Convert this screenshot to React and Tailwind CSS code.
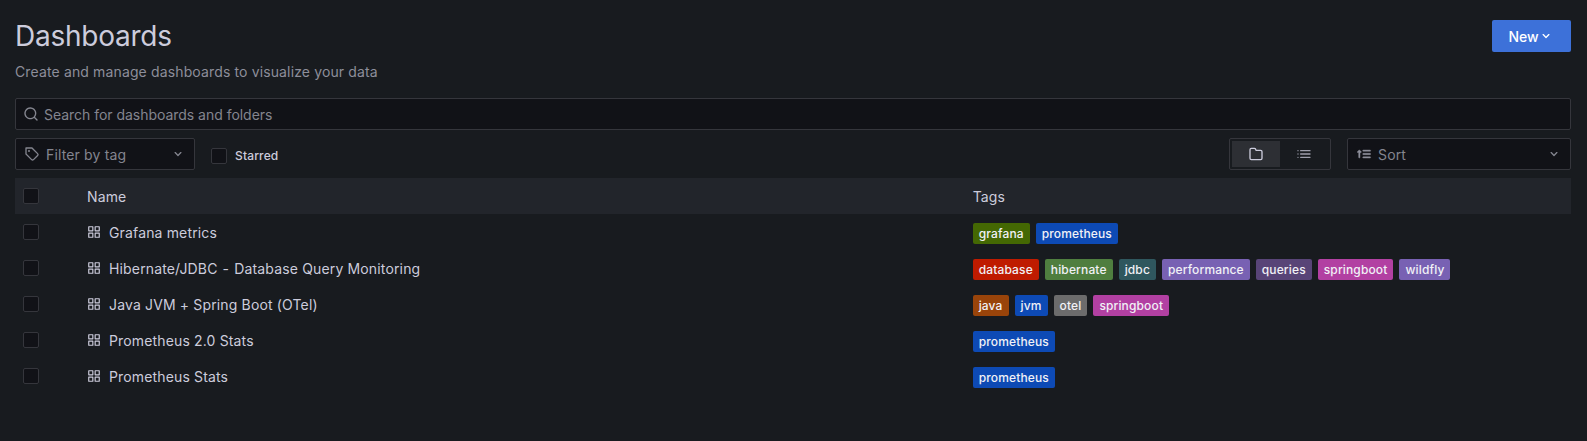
const ICONS = {
  search: "M21.71,20.29,18,16.61A9,9,0,1,0,16.61,18l3.68,3.68a1,1,0,0,0,1.42,0A1,1,0,0,0,21.71,20.29ZM11,18a7,7,0,1,1,7-7A7,7,0,0,1,11,18Z",
  angleDown: "M17,9.17a1,1,0,0,0-1.41,0L12,12.71,8.46,9.17a1,1,0,0,0-1.41,0,1,1,0,0,0,0,1.42l4.24,4.24a1,1,0,0,0,1.42,0L17,10.59A1,1,0,0,0,17,9.17Z",
  apps: "M10,13H3a1,1,0,0,0-1,1v7a1,1,0,0,0,1,1h7a1,1,0,0,0,1-1V14A1,1,0,0,0,10,13ZM9,20H4V15H9ZM21,2H14a1,1,0,0,0-1,1v7a1,1,0,0,0,1,1h7a1,1,0,0,0,1-1V3A1,1,0,0,0,21,2ZM20,9H15V4h5Zm1,4H14a1,1,0,0,0-1,1v7a1,1,0,0,0,1,1h7a1,1,0,0,0,1-1V14A1,1,0,0,0,21,13Zm-1,7H15V15h5ZM10,2H3A1,1,0,0,0,2,3v7a1,1,0,0,0,1,1h7a1,1,0,0,0,1-1V3A1,1,0,0,0,10,2ZM9,9H4V4H9Z",
  folder: "M19,5.5H12.72l-.32-1a3,3,0,0,0-2.84-2H5a3,3,0,0,0-3,3v13a3,3,0,0,0,3,3H19a3,3,0,0,0,3-3V8.5A3,3,0,0,0,19,5.5Zm1,13a1,1,0,0,1-1,1H5a1,1,0,0,1-1-1V5.5a1,1,0,0,1,1-1H9.56a1,1,0,0,1,.95.68l.54,1.64A1,1,0,0,0,12,7.5h7a1,1,0,0,1,1,1Z",
  list: "M3,6a1,1,0,1,0,0,2,1,1,0,1,0,0-2ZM7,8H21a1,1,0,0,0,0-2H7A1,1,0,0,0,7,8ZM3,11a1,1,0,1,0,0,2,1,1,0,1,0,0-2ZM21,11H7a1,1,0,0,0,0,2H21a1,1,0,0,0,0-2ZM3,16a1,1,0,1,0,0,2,1,1,0,1,0,0-2ZM21,16H7a1,1,0,0,0,0,2H21a1,1,0,0,0,0-2Z",
  tag: "M7.5,6A1.5,1.5,0,1,0,9,7.5,1.5,1.5,0,0,0,7.5,6Zm13.62,4.71L12.71,2.29A1,1,0,0,0,12,2H3A1,1,0,0,0,2,3v9a1,1,0,0,0,.29.71l8.42,8.41a3,3,0,0,0,4.24,0L21.12,15a3,3,0,0,0,0-4.24Zm-1.41,2.82h0l-6.18,6.17a1,1,0,0,1-1.41,0L4,11.59V4h7.59l8.12,8.12a1,1,0,0,1,.29.71A1,1,0,0,1,19.71,13.53Z",
  sort: "M5.71,6.29a1,1,0,0,0-1.42,0l-2,2A1,1,0,0,0,3.71,9.71L4,9.41V17a1,1,0,0,0,2,0V9.41l.29.3a1,1,0,0,0,1.42,0,1,1,0,0,0,0-1.42ZM11,8H21a1,1,0,0,0,0-2H11a1,1,0,0,0,0,2Zm10,3H11a1,1,0,0,0,0,2H21a1,1,0,0,0,0-2Zm0,5H11a1,1,0,0,0,0,2H21a1,1,0,0,0,0-2Z",
};

function Icon({ name, className = "size-4" }) {
  return (
    <svg viewBox="0 0 24 24" fill="currentColor" className={`shrink-0 ${className}`} aria-hidden="true">
      <path d={ICONS[name]} />
    </svg>
  );
}

const TAG_COLORS = {
  grafana: "bg-[#446803]",
  prometheus: "bg-[#0d4ab5]",
  database: "bg-[#bf1b00]",
  hibernate: "bg-[#4f7e3f]",
  jdbc: "bg-[#2f575e]",
  performance: "bg-[#7861b3]",
  queries: "bg-[#584477]",
  springboot: "bg-[#b240a2]",
  wildfly: "bg-[#7861b3]",
  java: "bg-[#99440a]",
  jvm: "bg-[#0d4ab5]",
  otel: "bg-[#6c6c6c]",
};

const DASHBOARDS = [
  { name: "Grafana metrics", tags: ["grafana", "prometheus"] },
  {
    name: (
      <>
        Hibernate/JDBC<span className="px-px"> - </span>Database Query Monitoring
      </>
    ),
    tags: ["database", "hibernate", "jdbc", "performance", "queries", "springboot", "wildfly"],
  },
  { name: "Java JVM + Spring Boot (OTel)", tags: ["java", "jvm", "otel", "springboot"] },
  { name: "Prometheus 2.0 Stats", tags: ["prometheus"] },
  { name: "Prometheus Stats", tags: ["prometheus"] },
];

function Checkbox() {
  return <span className="block size-4 shrink-0 rounded-[2px] border border-[#35363c] bg-[#111217]" />;
}

function Tag({ name }) {
  return (
    <span className={`h-[21px] rounded-[2px] px-1.5 text-xs leading-[21px] font-medium tracking-[0.0115em] text-[#f1f1f6] ${TAG_COLORS[name]}`}>
      {name}
    </span>
  );
}

const ROW = "grid h-9 grid-cols-[72px_885.7px_1fr]";
const FIELD = "flex h-8 items-center rounded-[2px] border border-[#35363c] bg-[#111217] text-[#84858f]";

export default function App() {
  return (
    <main className="h-[441px] bg-[#181b1f] pr-4 pl-[15px] font-['Inter','Liberation_Sans',sans-serif] text-sm leading-[22px] tracking-[0.01071em] text-[#ccccdc]">
      <header className="flex h-[98px] items-start justify-between pt-5">
        <div>
          <h1 className="text-[28px] leading-8 font-normal tracking-[-0.25px]">Dashboards</h1>
          <p className="mt-[9px] tracking-[0.135px] text-[#8d8e9a]">Create and manage dashboards to visualize your data</p>
        </div>
        <button className="flex h-8 w-[79px] items-center rounded-[2px] bg-[#3d71d9] pl-[16.5px] font-medium tracking-[-0.1px] text-white">
          <span className="pt-0.5">New</span>
          <Icon name="angleDown" className="size-4" />
        </button>
      </header>

      <div className={`${FIELD} gap-[5px] pl-[7px]`}>
        <Icon name="search" />
        <span className="pt-0.5 tracking-[-0.03px]">Search for dashboards and folders</span>
      </div>

      <div className="mt-2 flex h-8">
        <div className={`${FIELD} w-[180px] pr-2 pl-2`}>
          <Icon name="tag" />
          <span className="ml-1.5 grow pt-0.5">Filter by tag</span>
          <Icon name="angleDown" />
        </div>
        <label className="mt-2.5 ml-4 flex h-4 items-center gap-2 text-xs leading-4 font-medium tracking-[0.0125em]">
          <Checkbox />
          Starred
        </label>
        <div className="ml-auto flex w-[102px] rounded-[2px] border border-[#35363c] p-0.5">
          <span className="flex w-12 items-center justify-center bg-[#2d2f34]">
            <Icon name="folder" />
          </span>
          <span className="flex w-12 items-center justify-center text-[#9e9fac]">
            <Icon name="list" />
          </span>
        </div>
        <div className={`${FIELD} ml-4 w-56 pr-2 pl-2`}>
          <Icon name="sort" className="size-4 stroke-current stroke-[0.6] text-[#8d8e9a]" />
          <span className="ml-1.5 grow pt-0.5">Sort</span>
          <Icon name="angleDown" />
        </div>
      </div>

      <section className="mt-2">
        <div className={`${ROW} bg-[#22252b]`}>
          <div className="pt-2.5 pl-2"><Checkbox /></div>
          <div className="pt-2">Name</div>
          <div className="pt-2">Tags</div>
        </div>
        {DASHBOARDS.map((d, i) => (
          <div key={i} className={ROW}>
            <div className="pt-2.5 pl-2"><Checkbox /></div>
            <div className="flex gap-2 pt-2">
              <Icon name="apps" className="mt-[3px] size-3.5" />
              <span>{d.name}</span>
            </div>
            <div className="flex items-start gap-1.5 pt-[9px]">
              {d.tags.map((t) => <Tag key={t} name={t} />)}
            </div>
          </div>
        ))}
      </section>
    </main>
  );
}
